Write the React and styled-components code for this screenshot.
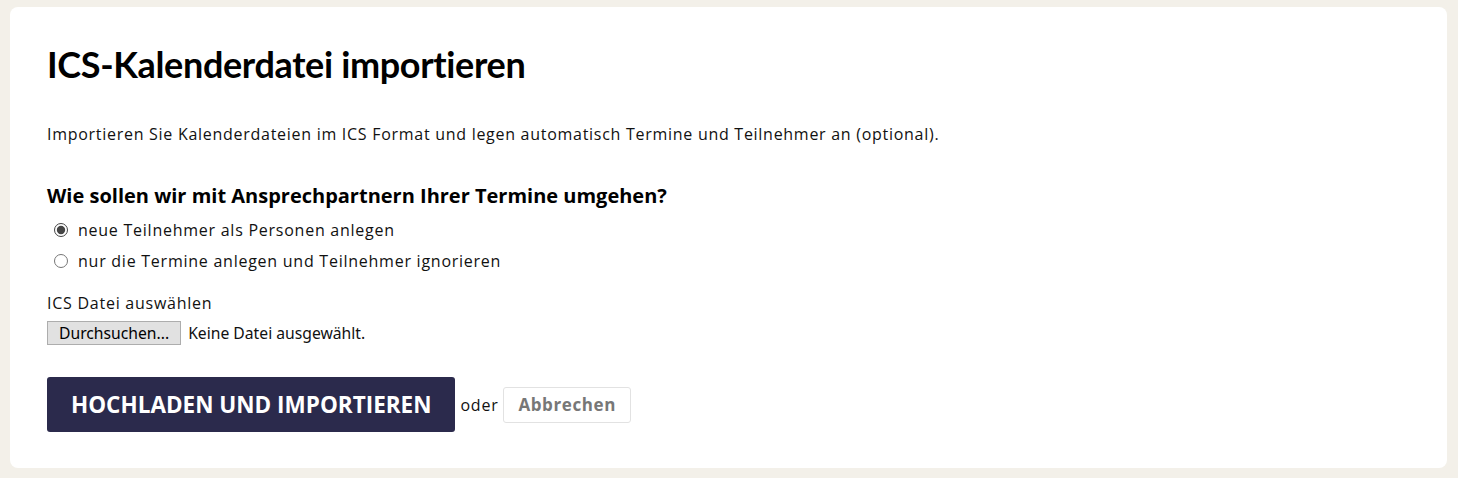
import React, { useState } from 'react'
import styled, { createGlobalStyle } from 'styled-components'

const GlobalStyle = createGlobalStyle`
  html, body {
    margin: 0;
    padding: 0;
    background: #f3f0e9;
  }
  body {
    font-family: "Open Sans", "Noto Sans", sans-serif;
    color: #111;
  }
`

const Page = styled.div`
  padding: 7px 11px 10px 10px;
  box-sizing: border-box;
  height: 478px;
`

const Card = styled.section`
  background: #fff;
  border-radius: 8px;
  height: 100%;
  box-sizing: border-box;
  padding: 35px 37px 0;
`

const Title = styled.h1`
  font-family: "Lato", "Open Sans", sans-serif;
  font-size: 36px;
  font-weight: 700;
  letter-spacing: -0.35px;
  line-height: 44px;
  margin: 0 0 37px;
  color: #000;
`

const Intro = styled.p`
  font-size: 16px;
  letter-spacing: 0.72px;
  line-height: 22px;
  margin: 0 0 38px;
`

const Question = styled.h2`
  font-size: 20px;
  font-weight: 700;
  line-height: 26px;
  margin: 0 0 10px;
  color: #000;
`

const Options = styled.div`
  display: flex;
  flex-direction: column;
  gap: 9px;
  margin-bottom: 20px;
`

const Option = styled.label`
  display: flex;
  align-items: center;
  gap: 10px;
  font-size: 16px;
  letter-spacing: 0.75px;
  line-height: 22px;
  padding-left: 7px;
  cursor: pointer;
`

const Radio = styled.input`
  margin: 0;
  width: 14px;
  height: 14px;
  accent-color: #444;
`

const FieldLabel = styled.div`
  font-size: 16px;
  letter-spacing: 0.75px;
  line-height: 22px;
  margin-bottom: 7px;
`

const FilePicker = styled.div`
  display: flex;
  align-items: center;
  gap: 7px;
  font-family: "Noto Sans", sans-serif;
  font-size: 15.7px;
  margin-bottom: 32px;
`

const BrowseButton = styled.button`
  font: inherit;
  height: 24px;
  padding: 0 11px;
  background: #e1e1e1;
  border: 1px solid #adadad;
  color: #000;
`

const Actions = styled.div`
  display: flex;
  align-items: center;
  gap: 5px;
`

const Primary = styled.button`
  height: 55px;
  padding: 0 24px;
  background: #2b2a4c;
  color: #fff;
  border: none;
  border-radius: 3px;
  font-family: inherit;
  font-size: 22.5px;
  font-weight: 700;
  text-transform: uppercase;
`

const Or = styled.span`
  font-size: 16px;
  letter-spacing: 0.75px;
`

const Secondary = styled.button`
  height: 36px;
  padding: 0 14px;
  background: #fff;
  border: 1px solid #e2e2e2;
  border-radius: 3px;
  color: #777;
  font-family: inherit;
  font-size: 17px;
  letter-spacing: 0.6px;
  font-weight: 700;
`

export default function App() {
  const [mode, setMode] = useState('persons')

  return (
    <>
      <GlobalStyle />
      <Page>
        <Card>
          <Title>ICS-Kalenderdatei importieren</Title>
          <Intro>
            Importieren Sie Kalenderdateien im ICS Format und legen automatisch Termine und Teilnehmer an (optional).
          </Intro>
          <Question>Wie sollen wir mit Ansprechpartnern Ihrer Termine umgehen?</Question>
          <Options>
            <Option>
              <Radio type="radio" name="mode" checked={mode === 'persons'} onChange={() => setMode('persons')} />
              neue Teilnehmer als Personen anlegen
            </Option>
            <Option>
              <Radio type="radio" name="mode" checked={mode === 'ignore'} onChange={() => setMode('ignore')} />
              nur die Termine anlegen und Teilnehmer ignorieren
            </Option>
          </Options>
          <FieldLabel>ICS Datei auswählen</FieldLabel>
          <FilePicker>
            <BrowseButton type="button">Durchsuchen...</BrowseButton>
            <span>Keine Datei ausgewählt.</span>
          </FilePicker>
          <Actions>
            <Primary type="button">Hochladen und importieren</Primary>
            <Or>oder</Or>
            <Secondary type="button">Abbrechen</Secondary>
          </Actions>
        </Card>
      </Page>
    </>
  )
}
